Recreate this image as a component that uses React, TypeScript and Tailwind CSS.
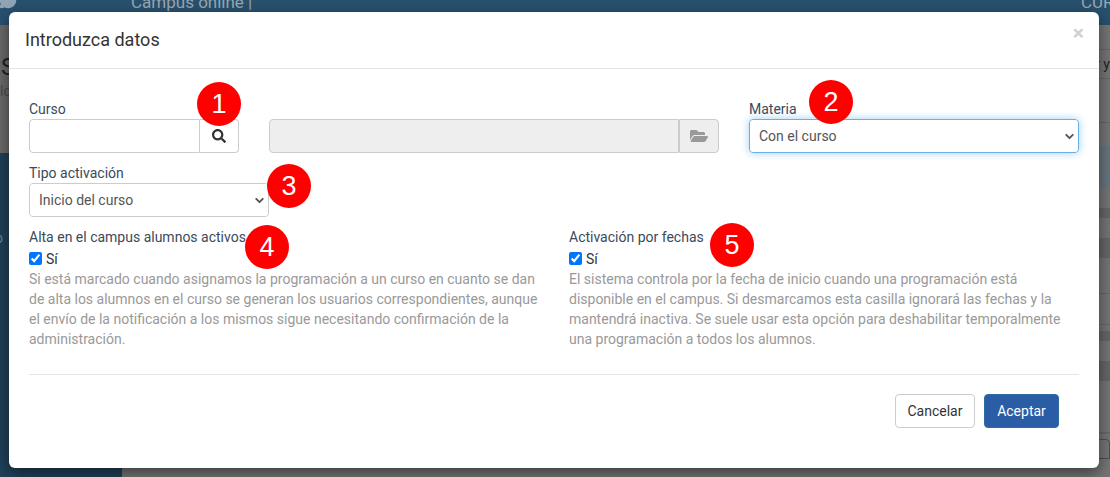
import { ChevronDown, MessageCircle } from "lucide-react";
import { FaFolderOpen, FaSearch } from "react-icons/fa";

const labelClass = "block h-[20px] leading-5 text-[#3b4a5a]";
const selectClass =
  "h-full w-full appearance-none rounded bg-white pl-[9px] text-sm text-[#555] outline-none";

function Badge({ n, className }: { n: number; className: string }) {
  return (
    <span
      className={`absolute flex h-[44px] w-[44px] items-center justify-center rounded-full bg-[#ff0000] font-['Liberation_Sans',sans-serif] text-[27px] text-white ${className}`}
    >
      {n}
    </span>
  );
}

function Chevron() {
  return (
    <ChevronDown
      size={13}
      strokeWidth={3.5}
      className="pointer-events-none absolute right-[2px] top-[10px] text-[#555]"
    />
  );
}

function Si() {
  return (
    <label className="flex h-[22px] items-center gap-[4px] pt-[1px] text-[#333]">
      <input type="checkbox" defaultChecked className="m-0 h-[13px] w-[13px] accent-[#0075ff]" />
      Sí
    </label>
  );
}

function Help({ children }: { children: string }) {
  return <p className="text-sm leading-5 text-[#999]">{children}</p>;
}

export default function App() {
  return (
    <div className="relative flex h-[477px] w-[1110px] flex-col overflow-hidden bg-[#757575] font-['Roboto',sans-serif] text-sm text-[#333]">
      {/* page behind the dimmed backdrop */}
      <div className="relative flex h-[25px] shrink-0 items-start bg-[#28516e] pl-[131px] text-[#9aa7b1]">
        <MessageCircle size={18} fill="#8fa5b5" className="absolute left-[-1px] top-[-9px] text-[#8fa5b5]" />
        <span className="mt-[-10px] text-[17px]">Campus online |</span>
        <span className="ml-auto mt-[-10px] w-[29px] whitespace-nowrap text-[17px]">CUR</span>
      </div>
      <div className="flex flex-1">
        <aside className="flex w-[122px] shrink-0 flex-col bg-[#1f4159]">
          <div className="h-[128px] bg-[#6a6a6a] pt-[32px] text-[#222]">
            <div className="ml-[1px] text-[24px] leading-5">S</div>
            <div className="mt-[4px] text-[#4a4a4a]">lo</div>
          </div>
          <div className="ml-[-5px] mt-[75px] text-[#6c8294]">o</div>
        </aside>
        <main className="flex flex-1 flex-col">
          <div className="h-[25px] border-b border-[#666]" />
          <div className="flex h-[29px] justify-end border-b border-[#666] pt-[4px] text-[#222]">ar y</div>
          <div className="h-[44px] border-b border-[#666]" />
          <div className="h-[23px]" />
          <div className="h-[42px] bg-[#66757d]" />
          <div className="h-[20px]" />
          <div className="h-[10px] bg-[#666]" />
          <div className="h-[20px]" />
          <div className="h-[20px] bg-[#666]" />
          <div className="h-[36px] border-b border-[#666]" />
          <div className="h-[31px] border-b border-[#666]" />
          <div className="h-[6px]" />
          <div className="h-[10px] bg-[#666]" />
          <div className="h-[20px]" />
          <div className="h-[20px] bg-[#666]" />
          <div className="h-[52px] border-b border-[#666]" />
          <div className="relative flex-1 border-t border-[#5f7078]">
            <div className="ml-[32px] mt-[5px] h-[20px] rounded-t border border-[#4f4f4f]" />
          </div>
        </main>
      </div>

      <div className="absolute left-[9px] top-[12px] flex h-[456px] w-[1090px] flex-col rounded-md bg-white shadow-[0_5px_15px_rgba(0,0,0,0.5)]">
        <header className="flex h-[57px] shrink-0 items-start justify-between border-b border-[#e5e5e5] pl-[16px] pr-[15px]">
          <h4 className="mt-[17px] text-lg leading-[21px] text-[#333]">Introduzca datos</h4>
          <span className="mt-[11px] text-[21px] font-bold leading-[21px] text-[#d0d0d0]">×</span>
        </header>

        <div className="flex flex-1 flex-col px-[20px] pt-[30px]">
          <div className="grid grid-cols-[210px_450px_330px] gap-x-[30px]">
            <div className="relative">
              <label className={labelClass}>Curso</label>
              <div className="flex h-[34px]">
                <input className="h-full w-[171px] rounded-l border border-[#ccc] outline-none" />
                <span className="flex h-full w-[39px] items-center justify-center rounded-r border border-l-0 border-[#ccc] bg-white">
                  <FaSearch size={14} className="text-[#333]" />
                </span>
              </div>
              <Badge n={1} className="left-[168px] top-[-17px]" />
            </div>
            <div className="pt-[20px]">
              <div className="flex h-[34px]">
                <div className="flex-1 rounded-l border border-[#ccc] bg-[#eeeeee]" />
                <span className="flex h-full w-[40px] items-center justify-center rounded-r border border-[#ccc] bg-[#eeeeee]">
                  <FaFolderOpen size={18} className="text-[#999]" />
                </span>
              </div>
            </div>
            <div className="relative">
              <label className={labelClass}>Materia</label>
              <div className="relative h-[34px] rounded border border-[#66afe9] shadow-[0_0_8px_rgba(102,175,233,0.6)]">
                <select className={selectClass} defaultValue="curso">
                  <option value="curso">Con el curso</option>
                </select>
                <Chevron />
              </div>
              <Badge n={2} className="left-[60px] top-[-19px]" />
            </div>
          </div>

          <div className="relative mt-[10px] w-[240px]">
            <label className={labelClass}>Tipo activación</label>
            <div className="relative h-[34px] rounded border border-[#ccc]">
              <select className={selectClass} defaultValue="inicio">
                <option value="inicio">Inicio del curso</option>
              </select>
              <Chevron />
            </div>
            <Badge n={3} className="left-[238px] top-[1px]" />
          </div>

          <div className="mt-[10px] grid grid-cols-2 gap-x-[30px]">
            <div className="relative">
              <label className={labelClass}>Alta en el campus alumnos activos</label>
              <Si />
              <Help>
                Si está marcado cuando asignamos la programación a un curso en cuanto se dan de alta los alumnos en el curso se generan los usuarios correspondientes, aunque el envío de la notificación a los mismos sigue necesitando confirmación de la administración.
              </Help>
              <Badge n={4} className="left-[216px] top-[-2px]" />
            </div>
            <div className="relative">
              <label className={labelClass}>Activación por fechas</label>
              <Si />
              <Help>
                El sistema controla por la fecha de inicio cuando una programación está disponible en el campus. Si desmarcamos esta casilla ignorará las fechas y la mantendrá inactiva. Se suele usar esta opción para deshabilitar temporalmente una programación a todos los alumnos.
              </Help>
              <Badge n={5} className="left-[141px] top-[-4px]" />
            </div>
          </div>

          <div className="mt-[25px] border-t border-[#e5e5e5] pt-[19px]">
            <div className="flex justify-end gap-[9px] pr-[20px]">
              <button className="h-[34px] w-[80px] rounded border border-[#ccc] bg-white text-[#333]">Cancelar</button>
              <button className="h-[34px] w-[75px] rounded border border-[#2e6da4] bg-[#2b5ca6] text-white">Aceptar</button>
            </div>
          </div>
        </div>
      </div>
    </div>
  );
}
